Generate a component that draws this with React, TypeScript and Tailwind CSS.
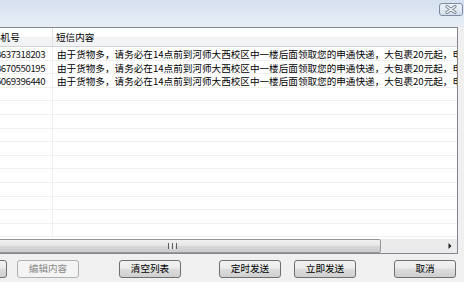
import React from 'react';

const rows = [
    { phone: '13637318203', text: '由于货物多，请务必在14点前到河师大西校区中一楼后面领取您的申通快递，大包裹20元起，电话联系' },
    { phone: '13670550195', text: '由于货物多，请务必在14点前到河师大西校区中一楼后面领取您的申通快递，大包裹20元起，电话联系' },
    { phone: '15069396440', text: '由于货物多，请务必在14点前到河师大西校区中一楼后面领取您的申通快递，大包裹20元起，电话联系' },
];

const font = { fontFamily: '"Noto Sans CJK SC", "Noto Sans", sans-serif' };

const WinButton: React.FC<{ label: string; disabled?: boolean; className?: string }> = ({ label, disabled, className }) => (
    <div
        className={`h-[18px] w-[62px] shrink-0 rounded-[3px] border flex items-center justify-center text-[9.6px] leading-none ${
            disabled
                ? 'border-[#adb2b5] bg-[#f4f4f4] text-[#8a8a8a]'
                : 'border-[#707070] bg-[linear-gradient(#f2f2f2,#ebebeb_45%,#dddddd_50%,#cfcfcf)] text-black'
        } ${className || ''}`}
    >
        {label}
    </div>
);

export default function App() {
    const filler = Array.from({ length: 11 });

    return (
        <div className="w-[464px] h-[282px] overflow-hidden bg-[#f0f0f0] flex flex-col" style={font}>
            {/* frame / title bar */}
            <div className="h-[27px] shrink-0 bg-linear-to-b from-[#d5e1f0] to-[#e8eef6] flex justify-end items-start">
                <div className="mt-[3px] mr-[1px] w-[24px] h-[13px] rounded-[3px] border border-[#7d8ca2] bg-linear-to-b from-[#eef3f9] to-[#d4deea] flex items-center justify-center">
                    <svg width="12" height="9" viewBox="0 0 12 9">
                        <path d="M2 1.5 L10 7.5 M10 1.5 L2 7.5" stroke="#6b7a8f" strokeWidth="3" strokeLinecap="round" />
                        <path d="M2 1.5 L10 7.5 M10 1.5 L2 7.5" stroke="#ffffff" strokeWidth="1.4" strokeLinecap="round" />
                    </svg>
                </div>
            </div>

            {/* list view */}
            <div className="ml-[-113px] w-[571px] h-[227px] shrink-0 border border-[#828790] bg-white flex flex-col overflow-hidden">
                {/* header */}
                <div className="h-[19px] shrink-0 flex border-b border-[#d5d5d5] bg-[linear-gradient(#ffffff,#ffffff_45%,#f3f4f6_50%,#f1f2f4)] text-[9.6px] text-black">
                    <div className="w-[100px] shrink-0 border-r border-[#e3e3e3] pl-[5px] flex items-center">姓名</div>
                    <div className="w-[65px] shrink-0 border-r border-[#e3e3e3] pl-[3px] flex items-center whitespace-nowrap">手机号</div>
                    <div className="flex-1 pl-[3px] flex items-center whitespace-nowrap">短信内容</div>
                </div>

                {/* rows */}
                <div className="flex-1 flex flex-col overflow-hidden text-[9.6px] text-black">
                    {rows.map((r, i) => (
                        <div key={i} className="h-[13.6px] shrink-0 flex border-b border-[#f0f0f0] leading-[14.6px]">
                            <div className="w-[100px] shrink-0 border-r border-[#f0f0f0]" />
                            <div className="w-[65px] shrink-0 border-r border-[#f0f0f0] pl-[3px] tracking-[-0.4px] whitespace-nowrap overflow-hidden text-[#111]">{r.phone}</div>
                            <div className="flex-1 pl-[4px] whitespace-nowrap overflow-hidden">{r.text}</div>
                        </div>
                    ))}
                    {filler.map((_, i) => (
                        <div key={i} className="h-[13.6px] shrink-0 flex border-b border-[#f0f0f0]">
                            <div className="w-[100px] shrink-0 border-r border-[#f0f0f0]" />
                            <div className="w-[65px] shrink-0 border-r border-[#f0f0f0]" />
                            <div className="flex-1" />
                        </div>
                    ))}
                </div>

                {/* horizontal scrollbar */}
                <div className="h-[14px] shrink-0 flex bg-[#ebebeb]">
                    <div className="w-[14px] shrink-0" />
                    <div className="w-[61px] shrink-0" />
                    <div className="w-[418px] shrink-0 rounded-[2px] border border-[#979797] bg-[linear-gradient(#f1f1f1,#e6e6e6_45%,#d6d6d6_55%,#cdcdcd)] flex items-center justify-center">
                        <div className="flex gap-[1px] h-[6px]">
                            <div className="w-[1px] bg-[#5f5f5f]" />
                            <div className="w-[1px] bg-[#f4f4f4]" />
                            <div className="w-[1px] bg-[#5f5f5f]" />
                            <div className="w-[1px] bg-[#f4f4f4]" />
                            <div className="w-[1px] bg-[#5f5f5f]" />
                        </div>
                    </div>
                    <div className="flex-1" />
                    <div className="w-[14px] shrink-0 flex items-center justify-center">
                        <svg width="4" height="6" viewBox="0 0 4 6">
                            <path d="M0.5 0 L3.5 3 L0.5 6 Z" fill="#222" />
                        </svg>
                    </div>
                </div>
            </div>

            {/* buttons */}
            <div className="mt-[6px] flex items-center ml-[-55px]">
                <WinButton label="导入号码" />
                <WinButton label="编辑内容" disabled className="ml-[10px]" />
                <WinButton label="清空列表" className="ml-[40px]" />
                <WinButton label="定时发送" className="ml-[38px]" />
                <WinButton label="立即发送" className="ml-[13px]" />
                <WinButton label="取消" className="ml-[38px]" />
            </div>
        </div>
    );
}
